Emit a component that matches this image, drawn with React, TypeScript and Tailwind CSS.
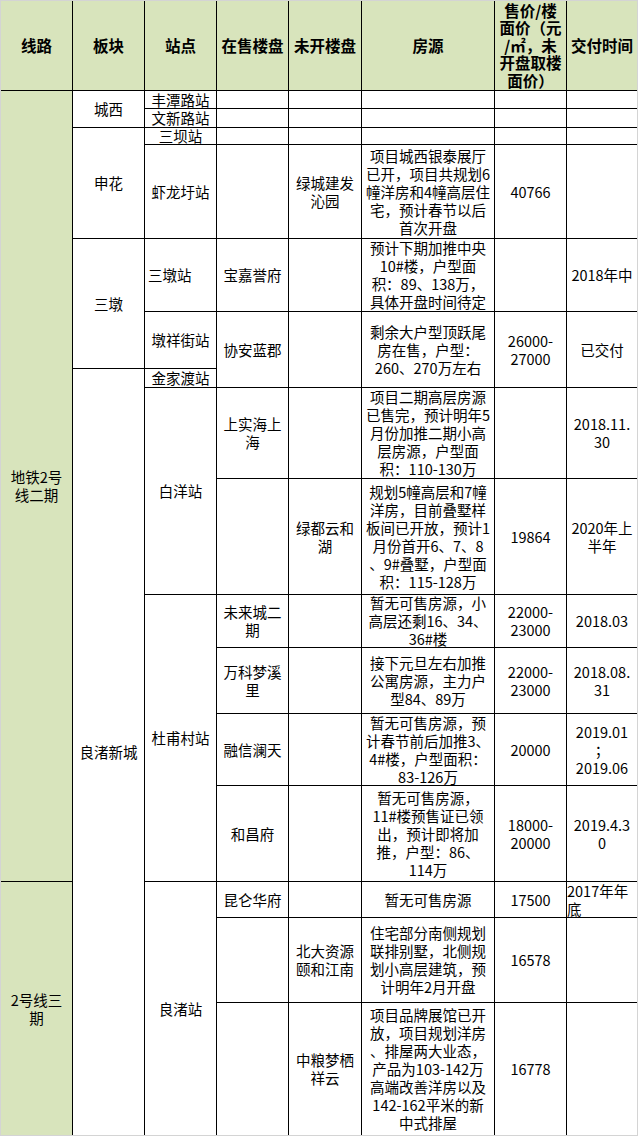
type CellProps = {
  pos: string
  text?: string
  head?: boolean
  green?: boolean
  noR?: boolean
  noB?: boolean
  align?: 'center' | 'left' | 'topleft'
}

function Cell({ pos, text = '', head, green, noR, noB, align = 'center' }: CellProps) {
  const alignCls =
    align === 'left'
      ? 'items-start justify-center text-left pl-[3px]'
      : align === 'topleft'
        ? 'items-start justify-start text-left'
        : 'items-center justify-center text-center'
  return (
    <div
      className={`${pos} flex flex-col ${alignCls} whitespace-nowrap border-black ${noR ? '' : 'border-r'} ${noB ? '' : 'border-b'} ${green ? 'bg-[#d8e4bc]' : 'bg-white'} ${head ? 'font-bold text-[15.5px] leading-[17.5px]' : 'text-[14.5px] leading-[18px]'}`}
    >
      {text.split('\n').map((line, i) => (
        <span key={i}>{line}</span>
      ))}
    </div>
  )
}

export default function App() {
  return (
    <div className="w-[638px] h-[1136px] border border-[#d4d4d4] bg-white text-black font-['Noto_Sans_CJK_SC',sans-serif] overflow-hidden">
      <div className="grid grid-cols-[72px_72px_72px_72px_73px_133px_72px_70px] grid-rows-[90px_18px_19px_17px_94px_73px_57px_19px_91px_116px_53px_66px_72px_96px_36px_85px_132px]">
        {/* header */}
        <Cell pos="col-start-1 row-start-1" text="线路" head green />
        <Cell pos="col-start-2 row-start-1" text="板块" head green />
        <Cell pos="col-start-3 row-start-1" text="站点" head green />
        <Cell pos="col-start-4 row-start-1" text="在售楼盘" head green />
        <Cell pos="col-start-5 row-start-1" text="未开楼盘" head green />
        <Cell pos="col-start-6 row-start-1" text="房源" head green />
        <Cell pos="col-start-7 row-start-1" text={'售价/楼\n面价（元\n/㎡，未\n开盘取楼\n面价）'} head green />
        <Cell pos="col-start-8 row-start-1" text="交付时间" head green noR />

        {/* 线路 */}
        <Cell pos="col-start-1 row-start-2 row-span-13" text={'地铁2号\n线二期'} green />
        <Cell pos="col-start-1 row-start-15 row-span-3" text={'2号线三\n期'} green noB />

        {/* 板块 */}
        <Cell pos="col-start-2 row-start-2 row-span-2" text="城西" />
        <Cell pos="col-start-2 row-start-4 row-span-2" text="申花" />
        <Cell pos="col-start-2 row-start-6 row-span-2" text="三墩" />
        <Cell pos="col-start-2 row-start-8 row-span-10" text="良渚新城" noB />

        {/* 站点 */}
        <Cell pos="col-start-3 row-start-2" text="丰潭路站" />
        <Cell pos="col-start-3 row-start-3" text="文新路站" />
        <Cell pos="col-start-3 row-start-4" text="三坝站" />
        <Cell pos="col-start-3 row-start-5" text="虾龙圩站" />
        <Cell pos="col-start-3 row-start-6" text="三墩站" align="left" />
        <Cell pos="col-start-3 row-start-7" text="墩祥街站" />
        <Cell pos="col-start-3 row-start-8" text="金家渡站" />
        <Cell pos="col-start-3 row-start-9 row-span-2" text="白洋站" />
        <Cell pos="col-start-3 row-start-11 row-span-4" text="杜甫村站" />
        <Cell pos="col-start-3 row-start-15 row-span-3" text="良渚站" noB />

        {/* 丰潭路站 */}
        <Cell pos="col-start-4 row-start-2" />
        <Cell pos="col-start-5 row-start-2" />
        <Cell pos="col-start-6 row-start-2" />
        <Cell pos="col-start-7 row-start-2" />
        <Cell pos="col-start-8 row-start-2" noR />

        {/* 文新路站 */}
        <Cell pos="col-start-4 row-start-3" />
        <Cell pos="col-start-5 row-start-3" />
        <Cell pos="col-start-6 row-start-3" />
        <Cell pos="col-start-7 row-start-3" />
        <Cell pos="col-start-8 row-start-3" noR />

        {/* 三坝站 */}
        <Cell pos="col-start-4 row-start-4" />
        <Cell pos="col-start-5 row-start-4" />
        <Cell pos="col-start-6 row-start-4" />
        <Cell pos="col-start-7 row-start-4" />
        <Cell pos="col-start-8 row-start-4" noR />

        {/* 虾龙圩站 */}
        <Cell pos="col-start-4 row-start-5" />
        <Cell pos="col-start-5 row-start-5" text={'绿城建发\n沁园'} />
        <Cell
          pos="col-start-6 row-start-5"
          text={'项目城西银泰展厅\n已开，项目共规划6\n幢洋房和4幢高层住\n宅，预计春节以后\n首次开盘'}
        />
        <Cell pos="col-start-7 row-start-5" text="40766" />
        <Cell pos="col-start-8 row-start-5" noR />

        {/* 三墩站 */}
        <Cell pos="col-start-4 row-start-6" text="宝嘉誉府" />
        <Cell pos="col-start-5 row-start-6" />
        <Cell
          pos="col-start-6 row-start-6"
          text={'预计下期加推中央\n10#楼，户型面\n积：89、138万，\n具体开盘时间待定'}
        />
        <Cell pos="col-start-7 row-start-6" />
        <Cell pos="col-start-8 row-start-6" text="2018年中" noR />

        {/* 墩祥街站 */}
        <Cell pos="col-start-4 row-start-7 row-span-2" text="协安蓝郡" />
        <Cell pos="col-start-5 row-start-7 row-span-2" />
        <Cell pos="col-start-6 row-start-7 row-span-2" text={'剩余大户型顶跃尾\n房在售，户型：\n260、270万左右'} />
        <Cell pos="col-start-7 row-start-7 row-span-2" text={'26000-\n27000'} />
        <Cell pos="col-start-8 row-start-7 row-span-2" text="已交付" noR />

        {/* 白洋站 */}
        <Cell pos="col-start-4 row-start-9" text={'上实海上\n海'} />
        <Cell pos="col-start-5 row-start-9" />
        <Cell
          pos="col-start-6 row-start-9"
          text={'项目二期高层房源\n已售完，预计明年5\n月份加推二期小高\n层房源，户型面\n积：110-130万'}
        />
        <Cell pos="col-start-7 row-start-9" />
        <Cell pos="col-start-8 row-start-9" text={'2018.11.\n30'} noR />

        <Cell pos="col-start-4 row-start-10" />
        <Cell pos="col-start-5 row-start-10" text={'绿都云和\n湖'} />
        <Cell
          pos="col-start-6 row-start-10"
          text={'规划5幢高层和7幢\n洋房，目前叠墅样\n板间已开放，预计1\n月份首开6、7、8\n、9#叠墅，户型面\n积：115-128万'}
        />
        <Cell pos="col-start-7 row-start-10" text="19864" />
        <Cell pos="col-start-8 row-start-10" text={'2020年上\n半年'} noR />

        {/* 杜甫村站 */}
        <Cell pos="col-start-4 row-start-11" text={'未来城二\n期'} />
        <Cell pos="col-start-5 row-start-11" />
        <Cell pos="col-start-6 row-start-11" text={'暂无可售房源，小\n高层还剩16、34、\n36#楼'} />
        <Cell pos="col-start-7 row-start-11" text={'22000-\n23000'} />
        <Cell pos="col-start-8 row-start-11" text="2018.03" noR />

        <Cell pos="col-start-4 row-start-12" text={'万科梦溪\n里'} />
        <Cell pos="col-start-5 row-start-12" />
        <Cell pos="col-start-6 row-start-12" text={'接下元旦左右加推\n公寓房源，主力户\n型84、89万'} />
        <Cell pos="col-start-7 row-start-12" text={'22000-\n23000'} />
        <Cell pos="col-start-8 row-start-12" text={'2018.08.\n31'} noR />

        <Cell pos="col-start-4 row-start-13" text="融信澜天" />
        <Cell pos="col-start-5 row-start-13" />
        <Cell
          pos="col-start-6 row-start-13"
          text={'暂无可售房源，预\n计春节前后加推3、\n4#楼，户型面积：\n83-126万'}
        />
        <Cell pos="col-start-7 row-start-13" text="20000" />
        <Cell pos="col-start-8 row-start-13" text={'2019.01\n；\n2019.06'} noR />

        <Cell pos="col-start-4 row-start-14" text="和昌府" />
        <Cell pos="col-start-5 row-start-14" />
        <Cell
          pos="col-start-6 row-start-14"
          text={'暂无可售房源，\n11#楼预售证已领\n出，预计即将加\n推，户型：86、\n114万'}
        />
        <Cell pos="col-start-7 row-start-14" text={'18000-\n20000'} />
        <Cell pos="col-start-8 row-start-14" text={'2019.4.3\n0'} noR />

        {/* 良渚站 */}
        <Cell pos="col-start-4 row-start-15" text="昆仑华府" />
        <Cell pos="col-start-5 row-start-15" />
        <Cell pos="col-start-6 row-start-15" text="暂无可售房源" />
        <Cell pos="col-start-7 row-start-15" text="17500" />
        <Cell pos="col-start-8 row-start-15" text={'2017年年\n底'} align="topleft" noR />

        <Cell pos="col-start-4 row-start-16" />
        <Cell pos="col-start-5 row-start-16" text={'北大资源\n颐和江南'} />
        <Cell
          pos="col-start-6 row-start-16"
          text={'住宅部分南侧规划\n联排别墅，北侧规\n划小高层建筑，预\n计明年2月开盘'}
        />
        <Cell pos="col-start-7 row-start-16" text="16578" />
        <Cell pos="col-start-8 row-start-16" noR />

        <Cell pos="col-start-4 row-start-17" noB />
        <Cell pos="col-start-5 row-start-17" text={'中粮梦栖\n祥云'} noB />
        <Cell
          pos="col-start-6 row-start-17"
          text={'项目品牌展馆已开\n放，项目规划洋房\n、排屋两大业态，\n产品为103-142万\n高端改善洋房以及\n142-162平米的新\n中式排屋'}
          noB
        />
        <Cell pos="col-start-7 row-start-17" text="16778" noB />
        <Cell pos="col-start-8 row-start-17" noR noB />
      </div>
    </div>
  )
}
